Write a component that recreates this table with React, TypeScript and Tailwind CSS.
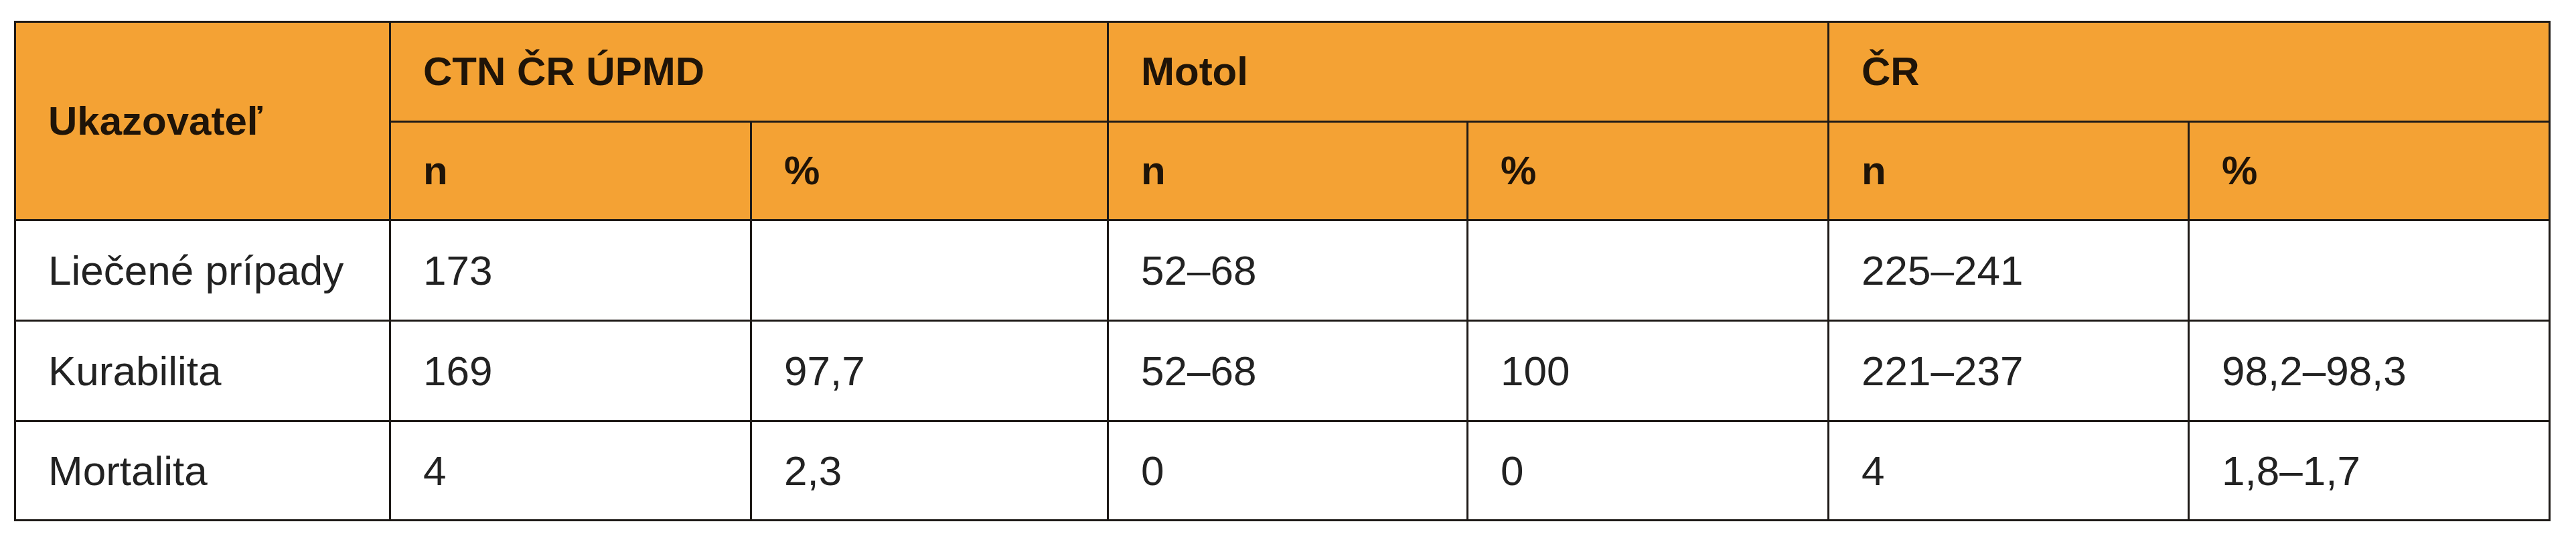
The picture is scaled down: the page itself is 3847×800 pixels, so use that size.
import React from "react";

const H = "bg-[#f4a234] text-[#1f1408] font-bold text-[60px] flex items-center pl-[48px]";
const B = "bg-white text-[#222222] text-[62px] flex items-center pl-[48px]";

const rows: string[][] = [
  ["Liečené prípady", "173", "", "52–68", "", "225–241", ""],
  ["Kurabilita", "169", "97,7", "52–68", "100", "221–237", "98,2–98,3"],
  ["Mortalita", "4", "2,3", "0", "0", "4", "1,8–1,7"],
];

export default function App() {
  return (
    <div className="w-[3847px] h-[800px] bg-white overflow-hidden" style={{ fontFamily: '"Liberation Sans", Arial, sans-serif' }}>
      <div className="ml-[21px] mt-[31px] inline-grid bg-[#1e1a17] p-[3px] gap-[3px] grid-cols-[557px_536px_530px_534px_536px_535px_536px] grid-rows-[146px_144px_147px_147px_145px] leading-none">
        <div className={`${H} row-span-2`}>Ukazovateľ</div>
        <div className={`${H} col-span-2`}>CTN ČR ÚPMD</div>
        <div className={`${H} col-span-2`}>Motol</div>
        <div className={`${H} col-span-2`}>ČR</div>
        <div className={H}>n</div>
        <div className={H}>%</div>
        <div className={H}>n</div>
        <div className={H}>%</div>
        <div className={H}>n</div>
        <div className={H}>%</div>
        {rows.map((r, i) =>
          r.map((c, j) => (
            <div key={`${i}-${j}`} className={B}>
              {c}
            </div>
          ))
        )}
      </div>
    </div>
  );
}
